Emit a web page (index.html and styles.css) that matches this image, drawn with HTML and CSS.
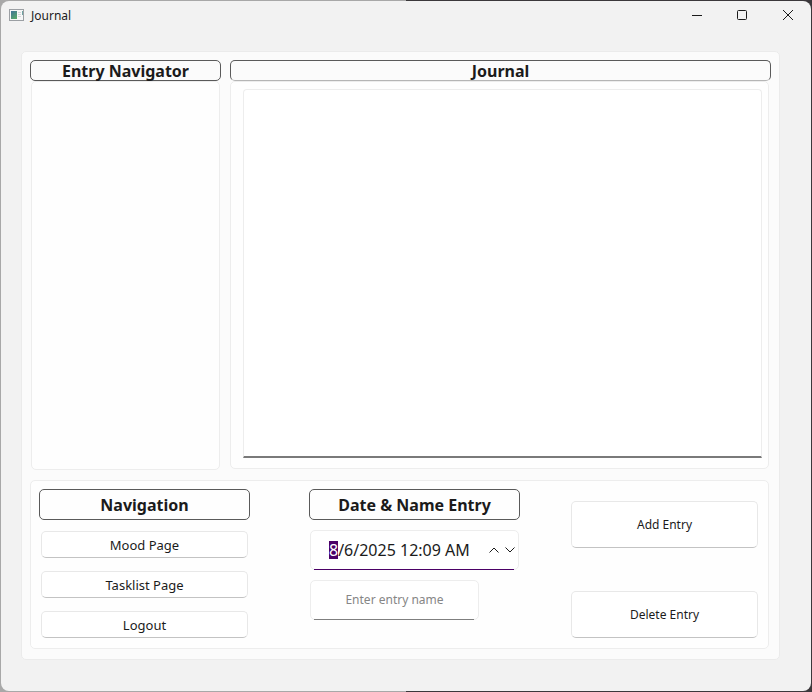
FILE: index.html
```html
<!DOCTYPE html>
<html lang="en">
<head>
<meta charset="utf-8">
<title>Journal</title>
<link rel="stylesheet" href="styles.css">
</head>
<body>
<div class="window">
  <header class="titlebar">
    <svg class="app-icon" width="15" height="12" viewBox="0 0 15 12" aria-hidden="true">
      <defs>
        <linearGradient id="app" x1="0" y1="0" x2="0.6" y2="1">
          <stop offset="0" stop-color="#3f7399"/>
          <stop offset="1" stop-color="#55a56c"/>
        </linearGradient>
      </defs>
      <rect x="0.5" y="0.5" width="14" height="11" fill="#f6f7f8" stroke="#9b9fa3"/>
      <rect x="2" y="2" width="6" height="8" fill="url(#app)"/>
      <path d="M9 3.5h3M9 5.5h3M9 7.5h3" stroke="#d5d8da"/>
      <rect x="13" y="2" width="1" height="4" fill="#6fa3a3"/>
    </svg>
    <span class="title">Journal</span>
    <button class="caption" type="button" aria-label="Minimize"><svg width="12" height="12" viewBox="0 0 12 12"><path d="M2 6.500h10"/></svg></button>
    <button class="caption" type="button" aria-label="Maximize"><svg width="12" height="12" viewBox="0 0 12 12"><rect x="1.5" y="1.5" width="9" height="9" rx="1"/></svg></button>
    <button class="caption" type="button" aria-label="Close"><svg width="12" height="12" viewBox="0 0 12 12"><path d="M1 1l10 10M11 1L1 11"/></svg></button>
  </header>

  <main class="panel">
    <div class="top">
      <section class="column">
        <h2 class="heading slim">Entry Navigator</h2>
        <div class="list"></div>
      </section>
      <section class="column">
        <h2 class="heading slim pale" id="journal-label">Journal</h2>
        <div class="editor"><textarea class="journal" aria-labelledby="journal-label"></textarea></div>
      </section>
    </div>

    <div class="bottom">
      <nav class="group">
        <h2 class="heading">Navigation</h2>
        <div class="links">
          <button class="button" type="button">Mood Page</button>
          <button class="button" type="button">Tasklist Page</button>
          <button class="button" type="button">Logout</button>
        </div>
      </nav>
      <section class="group">
        <h2 class="heading" id="entry-label">Date &amp; Name Entry</h2>
        <div class="fields">
          <div class="field date">
            <input id="date" type="text" value="8/6/2025 12:09 AM" aria-labelledby="entry-label" autofocus>
            <button class="step" type="button" aria-label="Later"><svg width="12" height="8" viewBox="0 0 12 8"><path d="M1.5 6.500L6 2l4.500 4.500"/></svg></button>
            <button class="step" type="button" aria-label="Earlier"><svg width="12" height="8" viewBox="0 0 12 8"><path d="M1.500 1.500L6 6l4.500-4.500"/></svg></button>
          </div>
          <div class="field name">
            <input type="text" placeholder="Enter entry name" aria-label="Entry name">
          </div>
        </div>
      </section>
      <div class="actions">
        <button class="button" type="button">Add Entry</button>
        <button class="button" type="button">Delete Entry</button>
      </div>
    </div>
  </main>
</div>
<script src="script.js"></script>
</body>
</html>
```
FILE: styles.css
```css
* { box-sizing: border-box; }

body {
  margin: 0;
  padding: 1px;
  min-height: 100vh;
  display: flex;
  background: linear-gradient(90deg, #a8a8a8 50%, #3b383b 50%);
  color: #1b1b1b;
  font: 13px/18px "Noto Sans", "Open Sans", sans-serif;
}

button, input, textarea { font: inherit; color: inherit; }

svg { display: block; fill: none; stroke: #1b1b1b; }
.app-icon { stroke: none; }

.window {
  flex: 1;
  display: flex;
  flex-direction: column;
  border-radius: 8px;
  background: #f2f2f2;
  overflow: hidden;
}

.titlebar {
  display: flex;
  align-items: center;
  height: 30px;
  padding-left: 8px;
  font-size: 12px;
}

.app-icon { margin-bottom: 2px; }
.title { flex: 1; padding-left: 7px; }

.caption {
  align-self: flex-start;
  width: 46px;
  height: 28px;
  padding: 0 17px;
  border: 0;
  background: none;
}

.panel {
  flex: 1;
  display: flex;
  flex-direction: column;
  gap: 10px;
  margin: 20px 31px 31px 20px;
  padding: 8px 8px 10px;
  border: 1px solid #ebebeb;
  border-radius: 5px;
  background: #fbfbfb;
}

.top {
  flex: 1;
  display: grid;
  grid-template-columns: 191px 1fr;
  gap: 9px;
}

.column { display: flex; flex-direction: column; }

.heading {
  margin: 0;
  padding: 5px 0 4px;
  border: 1px solid #5a5a5a;
  border-radius: 5px;
  text-align: center;
  font-size: 16px;
  line-height: 20px;
  font-weight: 700;
}

.slim { padding: 1px 0 0; line-height: 18px; }
.pale { border-bottom-color: #b5b5b5; }

.list, .editor, .bottom {
  border: 1px solid #ededed;
  border-radius: 5px;
  background: #fefefe;
}

.list { flex: 1; margin: 0 1px; }

.editor {
  flex: 1;
  display: flex;
  margin: 0 2px 1px 0;
  padding: 7px 6px 10px 12px;
}

.journal {
  flex: 1;
  padding: 8px;
  border: 1px solid #ededed;
  border-bottom: 2px solid #7a7a7a;
  border-radius: 4px 4px 0 0;
  background: #fff;
  resize: none;
  outline: 0;
}

.bottom {
  display: grid;
  grid-template-columns: 270px 1fr 187px;
  margin-right: 2px;
  padding: 8px 10px 10px 8px;
}

.group { width: 211px; }

.links {
  display: grid;
  gap: 13px;
  padding: 11px 2px 0;
}

.button {
  height: 27px;
  padding: 0;
  border: 1px solid #e8e8e8;
  border-bottom-color: #c3c3c3;
  border-radius: 5px;
  background: #fff;
}

.fields {
  display: grid;
  grid-template-columns: minmax(0, 1fr);
  gap: 10px;
  padding: 10px 1px 0;
}

.field {
  position: relative;
  display: flex;
  align-items: center;
  height: 40px;
  border: 1px solid #ededed;
  border-radius: 5px;
  background: #fff;
}

.field::after {
  content: "";
  position: absolute;
  inset: auto 4px -1px 3px;
  border-bottom: 1px solid #7f7f7f;
}

.field input {
  flex: 1;
  min-width: 0;
  padding: 0;
  border: 0;
  outline: 0;
  background: none;
}

.date { padding: 0 0 0 18px; font-size: 16px; }
.date::after { border-color: #4b0066; }
.date input::selection { background: #4b0066; color: #fff; }

.step {
  width: 16px;
  height: 24px;
  padding: 0 2px;
  border: 0;
  background: none;
}

.name { width: 169px; font-size: 12px; }
.name input { text-align: center; }
.name input::placeholder { color: #868686; opacity: 1; }

.actions {
  display: flex;
  flex-direction: column;
  justify-content: space-between;
  padding-top: 12px;
}

.actions .button { height: 47px; font-size: 12px; }
```
FILE: script.js
```js
// Start with the month section of the date selected.
const date = document.getElementById("date");
date.focus();
date.setSelectionRange(0, 1);
```
